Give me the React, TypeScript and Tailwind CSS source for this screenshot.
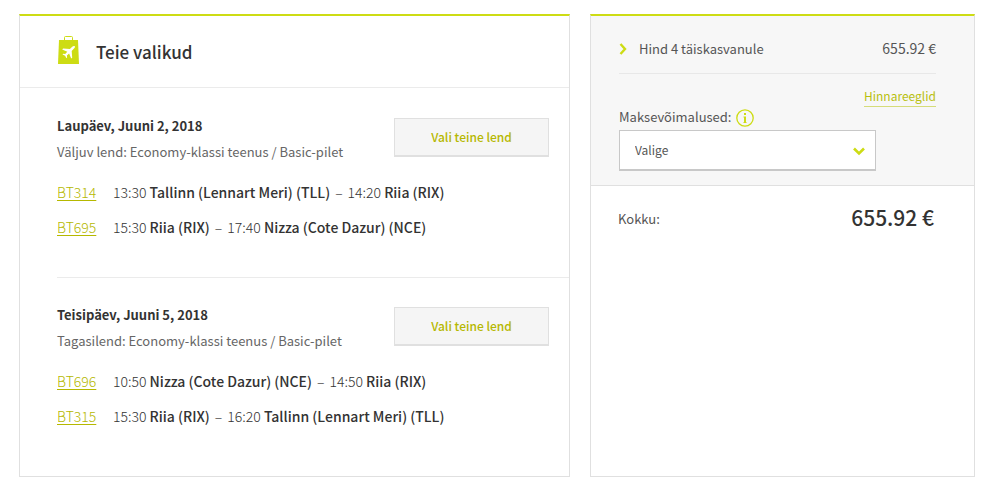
const trips = [
  {
    date: 'Laupäev, Juuni 2, 2018',
    info: 'Väljuv lend: Economy-klassi teenus / Basic-pilet',
    flights: [
      { code: 'BT314', dep: '13:30', from: 'Tallinn (Lennart Meri) (TLL)', arr: '14:20', to: 'Riia (RIX)' },
      { code: 'BT695', dep: '15:30', from: 'Riia (RIX)', arr: '17:40', to: 'Nizza (Cote Dazur) (NCE)' },
    ],
  },
  {
    date: 'Teisipäev, Juuni 5, 2018',
    info: 'Tagasilend: Economy-klassi teenus / Basic-pilet',
    flights: [
      { code: 'BT696', dep: '10:50', from: 'Nizza (Cote Dazur) (NCE)', arr: '14:50', to: 'Riia (RIX)' },
      { code: 'BT315', dep: '15:30', from: 'Riia (RIX)', arr: '16:20', to: 'Tallinn (Lennart Meri) (TLL)' },
    ],
  },
]

function BagIcon() {
  return (
    <svg width="21" height="28" viewBox="0 0 21 28" className="mb-1" aria-hidden="true">
      <path d="M6.5 4V1.500a1 1 0 0 1 1-1h6a1 1 0 0 1 1 1V4" fill="none" stroke="#cddc14" />
      <path d="M1 4h19l1 24H0z" fill="#cddc14" />
      <path
        d="M16.8 10.2c-.8-.6-1.9-.1-2.6.6l-2.3 2.3-6.8-.5-.9 1 5.100 2.100-2.100 2.200-2-.2-.7.7 2.600 1.300 1.300 2.600.7-.7-.2-2 2.200-2.100 2.100 5.100 1-.9-.5-6.800 2.300-2.300c.7-.7 1.200-1.800.8-2.400z"
        fill="#fff"
      />
    </svg>
  )
}

function TripSection({ trip }: { trip: (typeof trips)[number] }) {
  return (
    <section className="pt-6 pb-8 first:pt-[25px]">
      <div className="flex items-start justify-between pr-5">
        <div className="text-[13px] leading-[26px]">
          <h3 className="font-bold">{trip.date}</h3>
          <p className="text-[#666]">{trip.info}</p>
        </div>
        <button
          type="button"
          className="mt-[5px] h-[39px] w-[155px] border border-b-2 border-[#e0e0e0] bg-[#f5f5f5] text-[12px] font-medium text-[#b5b800]"
        >
          Vali teine lend
        </button>
      </div>
      <ul className="mt-[10px] leading-[35px]">
        {trip.flights.map((f) => (
          <li key={f.code} className="flex">
            <a href="#" className="w-14 font-light text-[#b5b800] underline underline-offset-2">
              {f.code}
            </a>
            <span className="font-light">
              {f.dep} <b className="font-medium">{f.from}</b>
              <span className="mx-[5px]">–</span>
              {f.arr} <b className="font-medium">{f.to}</b>
            </span>
          </li>
        ))}
      </ul>
    </section>
  )
}

export default function App() {
  return (
    <main className="grid grid-cols-[551fr_385fr] gap-5 bg-white pt-[14px] pr-[10px] pb-[9px] pl-[19px] font-['Noto_Sans_CJK_SC',sans-serif] text-[14px] text-[#333]">
      <div className="border border-t-2 border-[#e0e0e0] border-t-[#cddc14] pb-[10px]">
        <header className="flex h-[72px] items-center gap-[17px] border-b border-[#ebebeb] pl-[38px]">
          <BagIcon />
          <h2 className="text-[17px] font-medium">Teie valikud</h2>
        </header>
        <div className="ml-[37px] divide-y divide-[#ebebeb]">
          {trips.map((trip) => (
            <TripSection key={trip.date} trip={trip} />
          ))}
        </div>
      </div>

      <aside className="border border-t-2 border-[#e0e0e0] border-t-[#cddc14]">
        <div className="border-b border-[#e0e0e0] bg-[#f7f7f7] pr-[38px] pb-[14px] pl-[28px] text-[13px] text-[#555]">
          <div className="flex h-[58px] items-center border-b border-[#e8e8e8] pt-2">
            <svg width="8" height="12" viewBox="0 0 8 12" className="mr-3" aria-hidden="true">
              <path d="M1.500 1l4.500 5-4.500 5" fill="none" stroke="#cddc14" strokeWidth="2.4" />
            </svg>
            <span className="grow">Hind 4 täiskasvanule</span>
            <span className="text-[14px]">655.92 €</span>
          </div>
          <div className="flex justify-end pt-3">
            <a href="#" className="border-b border-[#d5dc7a] text-[12px] leading-5 text-[#b8c010]">
              Hinnareeglid
            </a>
          </div>
          <div className="flex h-[23px] items-center gap-[5px] pb-1">
            <label htmlFor="payment">Maksevõimalused:</label>
            <svg width="18" height="18" viewBox="0 0 18 18" className="mt-[2px]" aria-hidden="true">
              <circle cx="9" cy="9" r="8.2" fill="none" stroke="#cddc14" strokeWidth="1.3" />
              <path d="M8 4h2v2H8zM7.500 7.500H10V13h.5v1h-3v-1H8V8.500h-.5z" fill="#cddc14" />
            </svg>
          </div>
          <div className="relative w-[257px]">
            <select
              id="payment"
              className="h-[41px] w-full appearance-none border border-b-2 border-[#c8c8c8] bg-white pl-[15px] text-[12px]"
            >
              <option>Valige</option>
            </select>
            <svg
              width="12"
              height="9"
              viewBox="0 0 12 9"
              className="pointer-events-none absolute top-[17px] right-[11px]"
              aria-hidden="true"
            >
              <path d="M1 1.500l5 5 5-5" fill="none" stroke="#cddc14" strokeWidth="2.6" />
            </svg>
          </div>
        </div>
        <div className="flex items-center justify-between pt-[15px] pr-10 pl-[27px]">
          <span className="pt-1 text-[13px] text-[#555]">Kokku:</span>
          <strong className="text-[21px] leading-8 font-medium">655.92 €</strong>
        </div>
      </aside>
    </main>
  )
}
